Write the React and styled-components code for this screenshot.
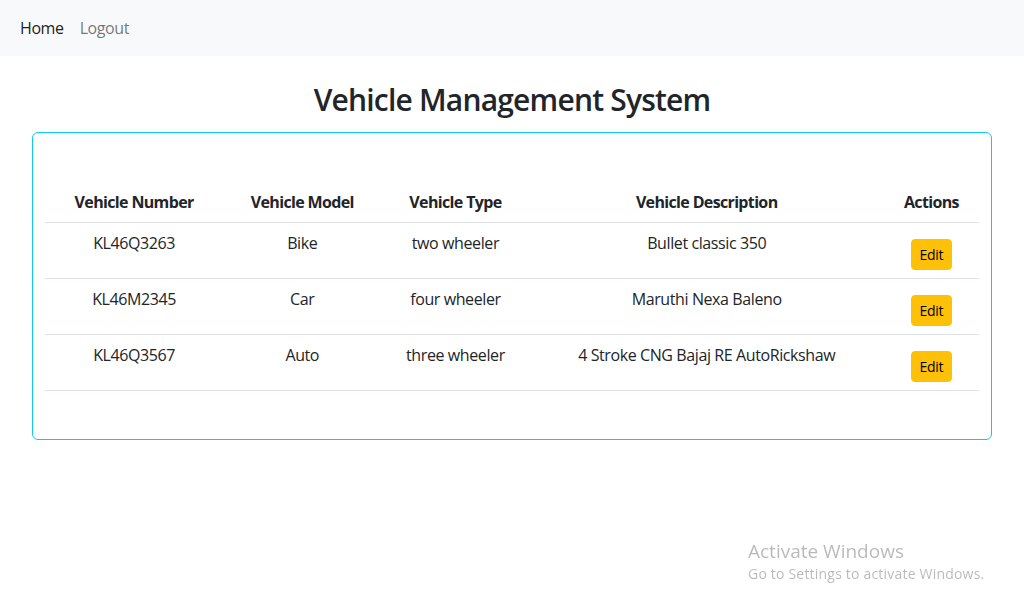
import React from 'react';
import styled, { createGlobalStyle } from 'styled-components';

const GlobalStyle = createGlobalStyle`
  * { box-sizing: border-box; }
  body {
    margin: 0;
    font-family: "Open Sans", "Noto Sans", sans-serif;
    font-size: 16px;
    line-height: 1.5;
    letter-spacing: -0.4px;
    color: #212529;
    background: #fff;
  }
`;

const Navbar = styled.nav`
  height: 56px;
  background: #f8f9fa;
  display: flex;
  align-items: center;
  padding: 0 12px;
`;

const NavLink = styled.a`
  padding: 8px;
  font-size: 16px;
  color: ${p => (p.active ? 'rgba(0,0,0,0.9)' : 'rgba(0,0,0,0.55)')};
  text-decoration: none;
  cursor: pointer;
`;

const Main = styled.main`
  padding: 0 32px;
`;

const Title = styled.h2`
  margin: 26px 0 14px;
  text-align: center;
  font-size: 30px;
  font-weight: 600;
  line-height: 1.2;
  letter-spacing: -0.8px;
`;

const Card = styled.div`
  border: 1px solid #0dcaf0;
  border-radius: 6px;
  padding: 49px 12px 48px;
`;

const Table = styled.table`
  width: 100%;
  border-collapse: collapse;
  table-layout: fixed;
`;

const Th = styled.th`
  width: ${p => p.w}px;
  padding: 8px;
  font-weight: 700;
  text-align: center;
  letter-spacing: -0.65px;
  border-bottom: 1px solid #dee2e6;
`;

const Td = styled.td`
  padding: 8px;
  text-align: center;
  vertical-align: top;
  border-bottom: 1px solid #dee2e6;
`;

const EditButton = styled.button`
  margin-top: 8px;
  padding: 4px 8px;
  font-family: inherit;
  font-size: 14px;
  line-height: 21px;
  letter-spacing: -0.3px;
  color: #000;
  background: #ffc107;
  border: 1px solid #ffc107;
  border-radius: 4px;
  cursor: pointer;
`;

const Watermark = styled.div`
  position: fixed;
  left: 748px;
  top: 538px;
  color: rgba(0, 0, 0, 0.28);
  font-family: "Open Sans", sans-serif;
  letter-spacing: 0;
  pointer-events: none;
`;

const WatermarkTitle = styled.div`
  font-size: 19px;
  line-height: 26px;
`;

const WatermarkText = styled.div`
  font-size: 14px;
  line-height: 20px;
  letter-spacing: 0.2px;
`;

const columns = [
  { label: 'Vehicle Number', w: 178 },
  { label: 'Vehicle Model', w: 158 },
  { label: 'Vehicle Type', w: 148 },
  { label: 'Vehicle Description', w: 354 },
  { label: 'Actions', w: 95 },
];

const vehicles = [
  { number: 'KL46Q3263', model: 'Bike', type: 'two wheeler', desc: 'Bullet classic 350' },
  { number: 'KL46M2345', model: 'Car', type: 'four wheeler', desc: 'Maruthi Nexa Baleno' },
  { number: 'KL46Q3567', model: 'Auto', type: 'three wheeler', desc: '4 Stroke CNG Bajaj RE AutoRickshaw' },
];

export default function App() {
  return (
    <>
      <GlobalStyle />
      <Navbar>
        <NavLink active>Home</NavLink>
        <NavLink>Logout</NavLink>
      </Navbar>
      <Main>
        <Title>Vehicle Management System</Title>
        <Card>
          <Table>
            <thead>
              <tr>
                {columns.map(c => (
                  <Th key={c.label} w={c.w}>{c.label}</Th>
                ))}
              </tr>
            </thead>
            <tbody>
              {vehicles.map(v => (
                <tr key={v.number}>
                  <Td>{v.number}</Td>
                  <Td>{v.model}</Td>
                  <Td>{v.type}</Td>
                  <Td>{v.desc}</Td>
                  <Td><EditButton>Edit</EditButton></Td>
                </tr>
              ))}
            </tbody>
          </Table>
        </Card>
      </Main>
      <Watermark>
        <WatermarkTitle>Activate Windows</WatermarkTitle>
        <WatermarkText>Go to Settings to activate Windows.</WatermarkText>
      </Watermark>
    </>
  );
}
